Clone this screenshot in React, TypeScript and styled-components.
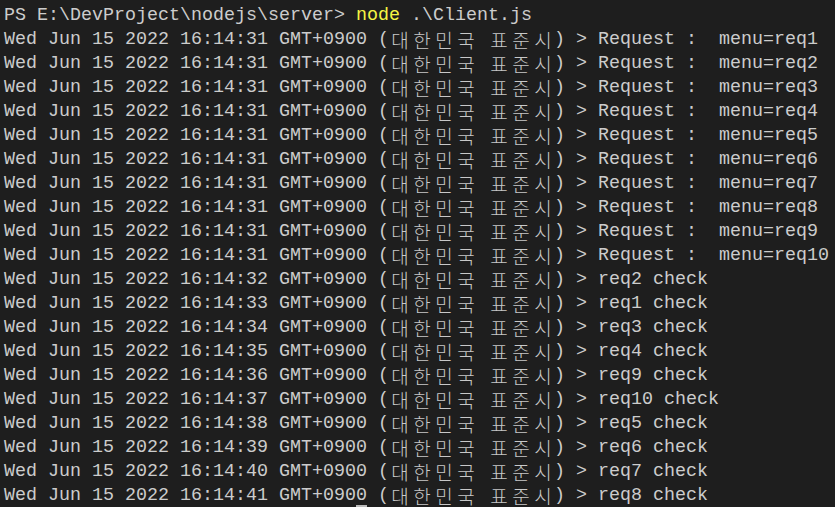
import React from "react";
import styled, { createGlobalStyle } from "styled-components";

const Global = createGlobalStyle`
  html, body { margin: 0; padding: 0; background: #1e1e1e; overflow: hidden; }
  #root { width: 835px; height: 507px; overflow: hidden; }
`;

const Terminal = styled.div`
  width: 835px;
  height: 507px;
  background: #1e1e1e;
  color: #cccccc;
  font-family: "Liberation Mono", "DejaVu Sans Mono", monospace;
  font-size: 18.3333px;
  padding: 4px 0 0 4px;
  box-sizing: border-box;
  overflow: hidden;
`;

const Line = styled.div`
  height: 24px;
  line-height: 24px;
  white-space: pre;
  display: flex;
  align-items: center;
`;

const Cmd = styled.span`
  color: #f5f543;
`;

const Wide = styled.span`
  display: inline-block;
  width: 22px;
  height: 24px;
  line-height: 24px;
  text-align: center;
  font-family: "Noto Sans CJK KR", sans-serif;
  font-weight: 300;
  font-size: 19px;
  color: #c8c8c8;
`;

const Cursor = styled.span<{ $col: number }>`
  display: inline-block;
  width: 11px;
  height: 20px;
  margin-left: ${(p) => p.$col * 11}px;
  margin-top: -3px;
  background: #bbbbbb;
  align-self: flex-start;
`;

const Korean: React.FC<{ text: string }> = ({ text }) => (
  <>
    {Array.from(text).map((c, i) =>
      c === " " ? <span key={i}> </span> : <Wide key={i}>{c}</Wide>
    )}
  </>
);

const entries: { t: string; msg: string }[] = [
  ...Array.from({ length: 10 }, (_, i) => ({
    t: "31",
    msg: `Request :  menu=req${i + 1}`,
  })),
  { t: "32", msg: "req2 check" },
  { t: "33", msg: "req1 check" },
  { t: "34", msg: "req3 check" },
  { t: "35", msg: "req4 check" },
  { t: "36", msg: "req9 check" },
  { t: "37", msg: "req10 check" },
  { t: "38", msg: "req5 check" },
  { t: "39", msg: "req6 check" },
  { t: "40", msg: "req7 check" },
  { t: "41", msg: "req8 check" },
];

export default function App() {
  return (
    <>
      <Global />
      <Terminal>
        <Line>
          {"PS E:\\DevProject\\nodejs\\server> "}
          <Cmd>node</Cmd>
          {" .\\Client.js"}
        </Line>
        {entries.map((e, i) => (
          <Line key={i}>
            {`Wed Jun 15 2022 16:14:${e.t} GMT+0900 (`}
            <Korean text="대한민국 표준시" />
            {`) > ${e.msg}`}
          </Line>
        ))}
        <Line>
          <Cursor $col={32} />
        </Line>
      </Terminal>
    </>
  );
}
